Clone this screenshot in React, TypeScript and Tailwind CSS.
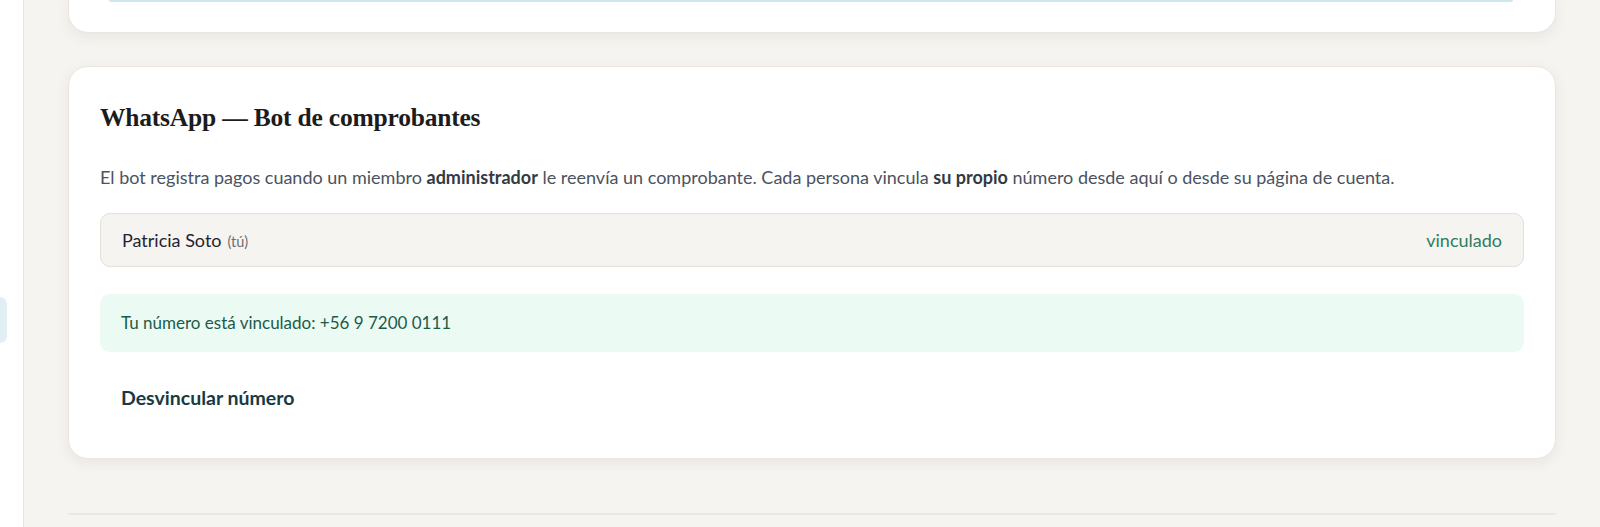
import React from "react";

export default function App() {
  const sans = { fontFamily: "Lato, 'Open Sans', sans-serif" } as React.CSSProperties;
  return (
    <div className="flex h-[527px] w-[1600px] overflow-hidden bg-[#f6f4f0]" style={sans}>
      <aside className="relative w-[24px] shrink-0 border-r border-[#e6e2dc] bg-white">
        <div className="absolute left-0 top-[297px] h-[46px] w-[7px] rounded-r-[7px] bg-[#e2eff2]" />
      </aside>
      <main className="flex flex-1 flex-col px-[44px]">
        <section className="h-[33px] w-full shrink-0 rounded-b-[20px] border-x border-b border-[#ebe6e1] bg-white shadow-[0_4px_14px_rgba(60,50,40,0.07)]">
          <div className="ml-[40px] mr-[42px] h-[1px] rounded-b-[6px] border-b-2 border-[#cfe7ec]" />
        </section>
        <section className="mt-[33px] h-[393px] w-full shrink-0 rounded-[20px] border border-[#ebe6e1] bg-white px-[31px] pt-[35px] shadow-[0_4px_14px_rgba(60,50,40,0.07)]">
          <h2
            className="text-[25.5px] font-bold leading-[32px] tracking-[-0.2px] text-[#1c1c1c]"
            style={{ fontFamily: "'Liberation Serif', 'DejaVu Serif', serif" }}
          >
            WhatsApp — Bot de comprobantes
          </h2>
          <p className="mt-[30px] text-[18px] leading-[26px] text-[#4b5260]">
            El bot registra pagos cuando un miembro <b className="font-bold text-[#333a44]">administrador</b> le
            reenvía un comprobante. Cada persona vincula <b className="font-bold text-[#333a44]">su propio</b> número
            desde aquí o desde su página de cuenta.
          </p>
          <div className="mt-[23px] flex h-[54px] items-center justify-between rounded-[10px] border border-[#e3dfda] bg-[#f6f4f1] pl-[21px] pr-[21px]">
            <div className="flex items-baseline gap-[6px]">
              <span className="text-[18px] text-[#1f2430]">Patricia Soto</span>
              <span className="text-[14.5px] text-[#6b7079]">(tú)</span>
            </div>
            <span className="text-[18px] text-[#2e7d5d]">vinculado</span>
          </div>
          <div className="mt-[27px] flex h-[58px] items-center rounded-[10px] bg-[#ebfbf3] px-[21px] text-[17px] text-[#1d5a4a]">
            Tu número está vinculado: +56 9 7200 0111
          </div>
          <button className="mt-[26px] px-[21px] py-[8px] text-[19.5px] font-bold leading-[24px] text-[#173a3f]">
            Desvincular número
          </button>
        </section>
        <div className="mt-[54px] h-[2px] w-full bg-[#ebe7e2]" />
      </main>
    </div>
  );
}
